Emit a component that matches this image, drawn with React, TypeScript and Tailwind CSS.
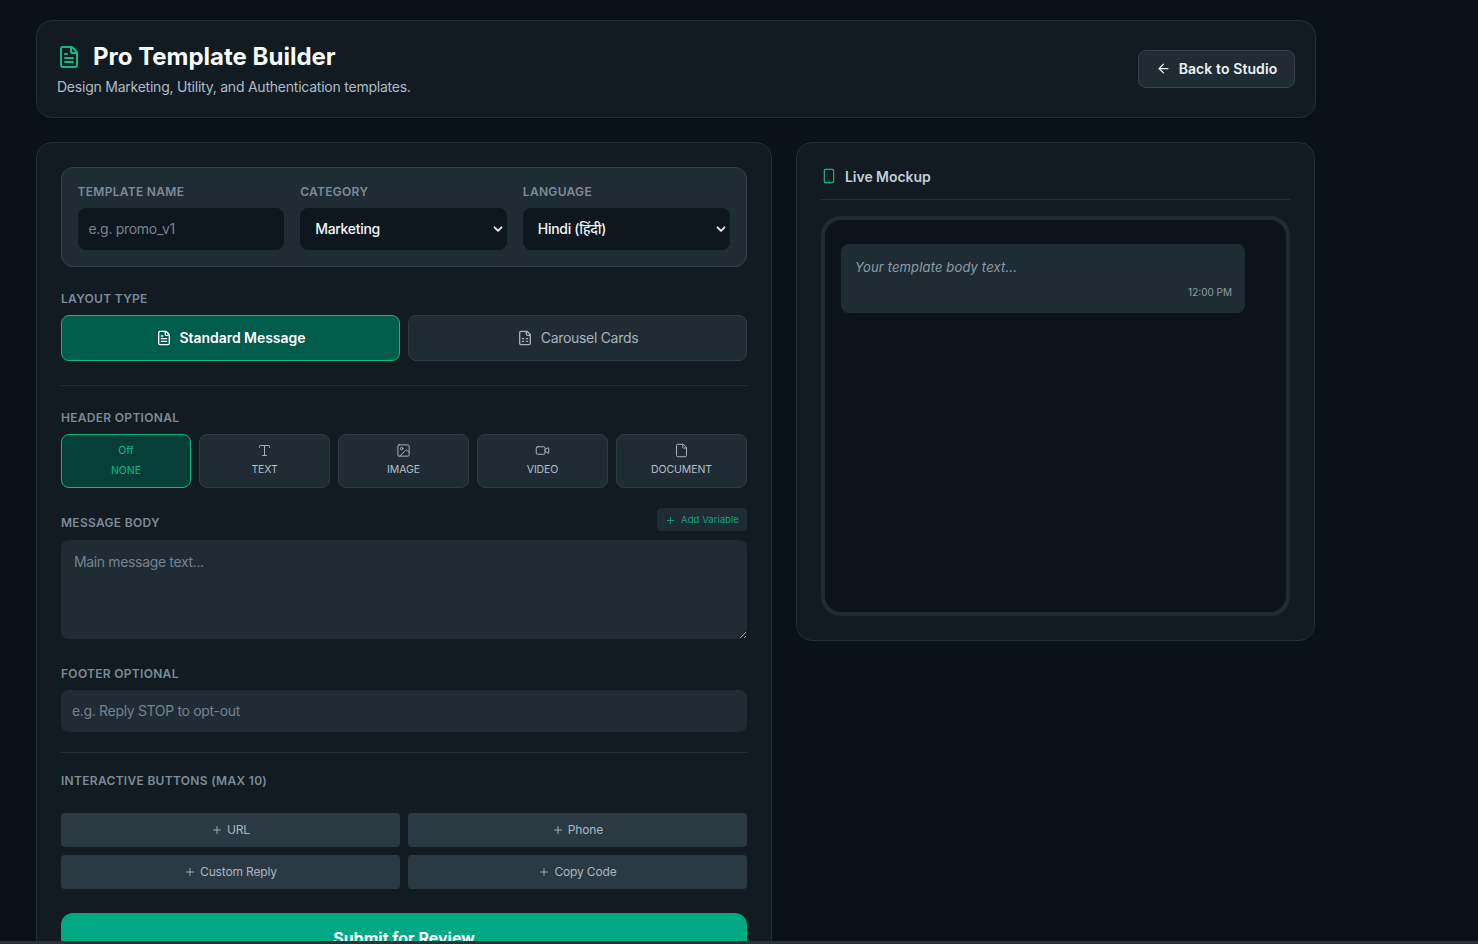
import { ArrowLeft, File, FileText, Image, Plus, Smartphone, Type, Video } from "lucide-react";
import type { ReactNode } from "react";

function Label({ children }: { children: ReactNode }) {
  return <div className="text-[12px] leading-[16px] font-semibold tracking-[0.3px] text-[#7d8b99] uppercase">{children}</div>;
}

function CarouselIcon() {
  return (
    <svg width="16" height="16" viewBox="0 0 24 24" fill="none" stroke="currentColor" strokeWidth="2" strokeLinecap="round" strokeLinejoin="round">
      <path d="M15 2H6a2 2 0 0 0-2 2v16a2 2 0 0 0 2 2h12a2 2 0 0 0 2-2V7Z" />
      <path d="M14 2v4a2 2 0 0 0 2 2h4" />
      <path d="M8 13h2M14 13h2M8 17h2M14 17h2" />
    </svg>
  );
}

function Chevron() {
  return (
    <svg width="10" height="10" viewBox="0 0 10 10" fill="none" stroke="#e8edf2" strokeWidth="1.8" strokeLinecap="round" strokeLinejoin="round">
      <path d="M1.5 3.3 5 6.8l3.5-3.5" />
    </svg>
  );
}

function SelectBox({ value }: { value: string }) {
  return (
    <div className="h-[42px] rounded-lg bg-[#0f171e] pl-[15px] pr-[4px] pb-[2px] flex items-center justify-between text-[14px] tracking-[-0.3px] text-[#f1f5f9]">
      <span className="font-medium">{value}</span>
      <span className="pt-[2px]"><Chevron /></span>
    </div>
  );
}

function HeaderOption({ icon, label }: { icon: ReactNode; label: string }) {
  return (
    <div className="h-[54px] rounded-lg border border-[#2f3b45] bg-[#202c33] pb-[3px] flex flex-col items-center justify-center gap-[5px] text-[10.5px] leading-[14px] tracking-[-0.1px] text-[#b3bfca]">
      <span className="text-[#a6b3bf]">{icon}</span>
      {label}
    </div>
  );
}

function AddButton({ label }: { label: string }) {
  return (
    <div className="h-[34px] rounded bg-[#2a3942] flex items-center justify-center gap-[4px] text-[12px] tracking-[-0.15px] text-[#aab6c2]">
      <Plus size={12} strokeWidth={1.8} />
      {label}
    </div>
  );
}

export default function App() {
  return (
    <div className="h-[944px] overflow-hidden bg-[#0a1118] relative" style={{ fontFamily: "Inter, 'Noto Sans', sans-serif" }}>
      <div className="w-[1280px] ml-[36px] pt-[20px]">
        {/* Page header */}
        <div className="h-[98px] rounded-2xl border border-[#232e37] bg-[#111b21] px-[20px] flex items-center justify-between">
          <div>
            <div className="flex items-center gap-[12px]">
              <FileText size={24} strokeWidth={2} className="text-[#10b981]" />
              <h1 className="text-[24px] leading-[32px] font-bold text-[#f8fafc]">Pro Template Builder</h1>
            </div>
            <p className="text-[14px] leading-[20px] mt-[4px] tracking-[-0.23px] text-[#aebbc8]">Design Marketing, Utility, and Authentication templates.</p>
          </div>
          <div className="h-[38px] w-[157px] pb-[1px] rounded-lg border border-[#36424d] bg-[#202c33] flex items-center justify-center gap-[8px] text-[14px] font-semibold tracking-[0.1px] text-[#eef2f6]">
            <ArrowLeft size={15} strokeWidth={2} />
            Back to Studio
          </div>
        </div>

        <div className="flex gap-[24px] mt-[24px] items-start">
          {/* Builder */}
          <div className="w-[736px] rounded-t-2xl border border-[#232e37] bg-[#111b21] p-[24px] shrink-0">
            <div className="h-[100px] rounded-xl border border-[#36424d] bg-[#202c33] pl-[15.5px] pr-[16.5px] pt-[16px] grid grid-cols-3 gap-x-[16px]">
              <div>
                <Label>Template Name</Label>
                <div className="mt-[8px] h-[42px] rounded-lg bg-[#0f171e] px-[11px] pb-[2px] flex items-center text-[14px] tracking-[-0.3px] text-[#75828f]">e.g. promo_v1</div>
              </div>
              <div>
                <Label>Category</Label>
                <div className="mt-[8px]"><SelectBox value="Marketing" /></div>
              </div>
              <div>
                <Label>Language</Label>
                <div className="mt-[8px]"><SelectBox value="Hindi (हिंदी)" /></div>
              </div>
            </div>

            <div className="mt-[24px]"><Label>Layout Type</Label></div>
            <div className="mt-[8px] grid grid-cols-2 gap-[8px]">
              <div className="h-[46px] pb-[1px] rounded-lg border border-[#10b981] bg-[#005c4b] flex items-center justify-center gap-[8px] text-[14px] font-semibold tracking-[-0.05px] text-white">
                <FileText size={16} strokeWidth={2} />
                Standard Message
              </div>
              <div className="h-[46px] pb-[1px] rounded-lg border border-[#2f3b45] bg-[#202c33] flex items-center justify-center gap-[8px] text-[14px] tracking-[-0.3px] text-[#a6b3bf]">
                <CarouselIcon />
                Carousel Cards
              </div>
            </div>

            <div className="mt-[24px] border-t border-[#232e37]" />

            <div className="mt-[24px]"><Label>Header Optional</Label></div>
            <div className="mt-[8px] grid grid-cols-[130px_1fr_1fr_1fr_1fr] gap-[8px]">
              <div className="h-[54px] rounded-lg border border-[#10b981] bg-[#063f37] flex flex-col items-center justify-center gap-[6px] text-[10.5px] leading-[14px] text-[#10b981]">
                <span>Off</span>
                NONE
              </div>
              <HeaderOption icon={<Type size={15} strokeWidth={1.6} />} label="TEXT" />
              <HeaderOption icon={<Image size={15} strokeWidth={1.6} />} label="IMAGE" />
              <HeaderOption icon={<Video size={15} strokeWidth={1.6} />} label="VIDEO" />
              <HeaderOption icon={<File size={15} strokeWidth={1.6} />} label="DOCUMENT" />
            </div>

            <div className="mt-[20px] flex items-center justify-between">
              <div className="pt-[6px]"><Label>Message Body</Label></div>
              <div className="h-[23px] w-[90px] pt-[1px] rounded bg-[#202c33] flex items-center justify-center gap-[5px] text-[9.6px] text-[#10a37f]">
                <Plus size={11} strokeWidth={2} />
                Add Variable
              </div>
            </div>
            <textarea
              readOnly
              placeholder="Main message text..."
              className="mt-[9px] block w-full h-[99px] rounded-lg bg-[#202c33] px-[13px] py-[12px] text-[14px] leading-[20px] tracking-[-0.35px] text-[#75828f] placeholder:text-[#75828f] outline-none"
            />

            <div className="mt-[27px]"><Label>Footer Optional</Label></div>
            <div className="mt-[8px] h-[42px] pb-[2px] rounded-lg bg-[#202c33] px-[11px] flex items-center text-[14px] tracking-[-0.33px] text-[#75828f]">e.g. Reply STOP to opt-out</div>

            <div className="mt-[20px] border-t border-[#232e37]" />

            <div className="mt-[20px]"><Label>Interactive Buttons (Max 10)</Label></div>
            <div className="mt-[24px] grid grid-cols-2 gap-[8px]">
              <AddButton label="URL" />
              <AddButton label="Phone" />
              <AddButton label="Custom Reply" />
              <AddButton label="Copy Code" />
            </div>

            <div className="mt-[24px] h-[50px] rounded-xl bg-[#00a884] flex items-center justify-center text-[16px] font-bold text-white">Submit for Review</div>
          </div>

          {/* Preview */}
          <div className="w-[519px] h-[499px] rounded-2xl border border-[#232e37] bg-[#111b21] px-[24px] pt-[24px]">
            <div className="h-[33px] pb-[14px] border-b border-[#232e37] flex items-center gap-[8px] text-[14px] font-semibold tracking-[-0.05px] text-[#c3ced8]">
              <Smartphone size={16} strokeWidth={1.8} className="text-[#10b981]" />
              Live Mockup
            </div>
            <div className="mt-[16px] h-[400px] rounded-[20px] border-[4px] border-[#202c33] bg-[#0c131a] pl-[16px] pr-[41px] pt-[24px]">
              <div className="h-[69px] rounded-lg bg-[#202c33] pl-[14px] pr-[13px] pt-[14px]">
                <div className="text-[13px] leading-[18px] italic tracking-[0.15px] text-[#8f9ca8]">Your template body text...</div>
                <div className="mt-[9px] text-right text-[10px] leading-[14px] text-[#8f9ca8]">12:00 PM</div>
              </div>
            </div>
          </div>
        </div>
      </div>
      <div className="absolute left-0 right-0 bottom-0 h-[3px] bg-[#2a3138]" />
    </div>
  );
}
